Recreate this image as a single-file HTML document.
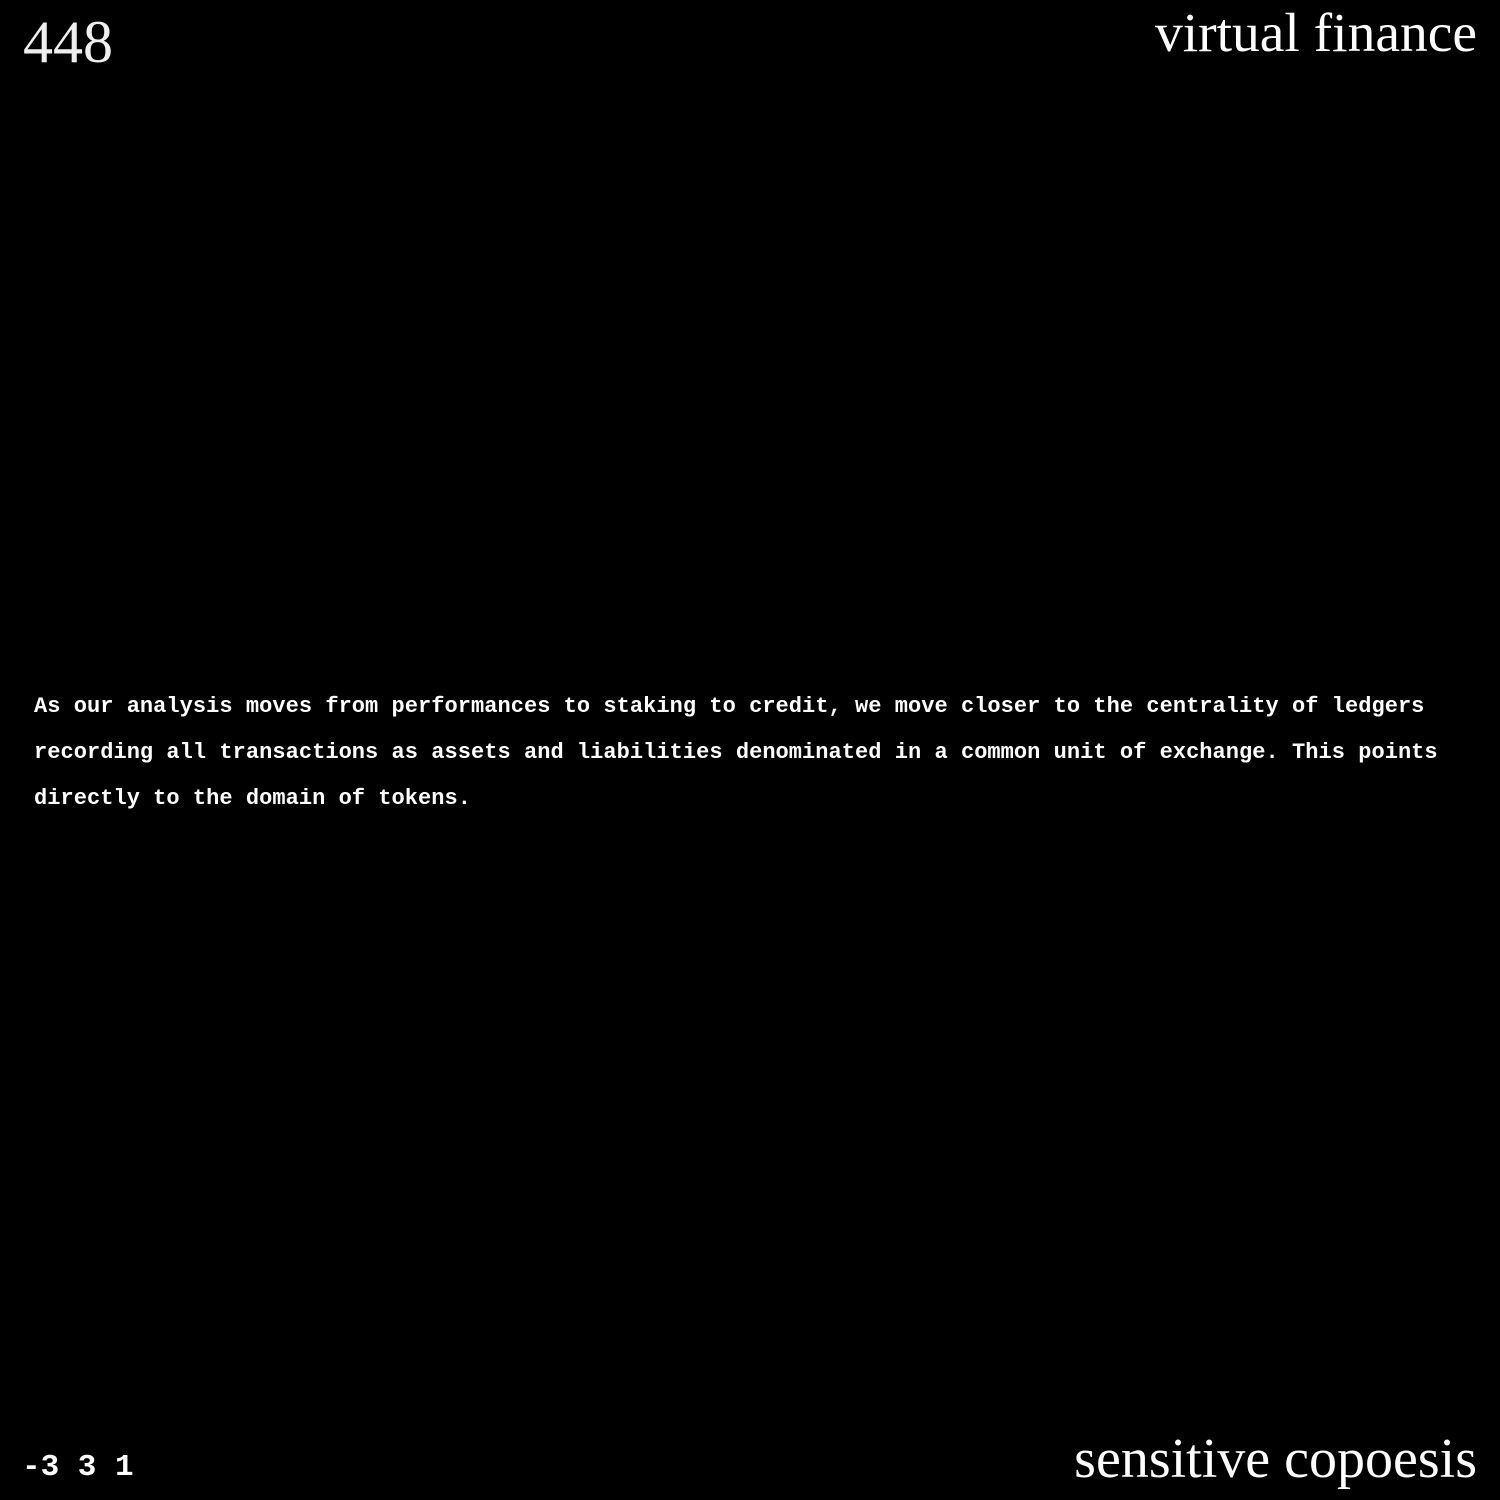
<!DOCTYPE html>
<html><head><style>
html,body{margin:0;padding:0;background:#000;width:1500px;height:1500px;overflow:hidden;color:#fff}
.a{position:absolute;white-space:nowrap}
#n{left:23px;top:12px;font:60px/1 "Liberation Serif",serif;color:#eee}
#t{right:23px;top:6px;font:55.5px/1 "Liberation Serif",serif}
#b{right:23px;top:1431px;font:56px/1 "Liberation Serif",serif}
#c{left:22px;top:1452px;font:31px/1 "Liberation Mono",monospace;font-weight:bold}
#p{left:34px;top:684px;width:1450px;font:bold 22px/46px "Liberation Mono",monospace;white-space:normal;letter-spacing:0.04px}
</style></head><body>
<div class="a" id="n">448</div>
<div class="a" id="t">virtual finance</div>
<div class="a" id="p">As our analysis moves from performances to staking to credit, we move closer to the centrality of ledgers<br>recording all transactions as assets and liabilities denominated in a common unit of exchange. This points<br>directly to the domain of tokens.</div>
<div class="a" id="c">-3 3 1</div>
<div class="a" id="b">sensitive copoesis</div>
</body></html>
